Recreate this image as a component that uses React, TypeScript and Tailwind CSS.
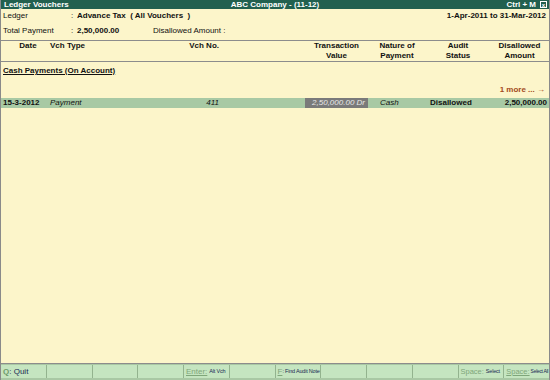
import React from "react";

const Cell = ({ children }: { children?: React.ReactNode }) => (
  <div className="flex-1 h-full border-r border-[#93b38e] last:border-r-0 flex items-center pl-[2px] overflow-hidden whitespace-nowrap bg-[#c5e5c0]">
    {children}
  </div>
);

export default function App() {
  return (
    <div
      className="w-[550px] h-[380px] flex flex-col bg-[#fcf5ca] border-l border-r border-[#8a8a8a] text-[8px] text-[#111] overflow-hidden"
      style={{ fontFamily: '"Liberation Sans", Arial, sans-serif' }}
    >
      {/* Title bar */}
      <div className="h-[9px] bg-[#22604f] text-white font-bold flex items-center leading-[9px] relative">
        <div className="pl-[3px] flex-1">Ledger Vouchers</div>
        <div className="absolute left-0 right-0 text-center">ABC Company - (11-12)</div>
        <div className="flex items-center gap-[4px] pr-[2px]">
          <span>Ctrl + M</span>
          <span className="w-[7px] h-[7px] border border-white flex items-center justify-center text-[6px] leading-[6px]">x</span>
        </div>
      </div>

      {/* Info */}
      <div className="pt-[2px] pb-[4px] leading-[10px]">
        <div className="flex">
          <div className="w-[70px] pl-[2px]">Ledger</div>
          <div className="w-[6px]">:</div>
          <div className="font-bold flex-1 whitespace-pre">Advance Tax  ( All Vouchers  )</div>
          <div className="font-bold pr-[3px]">1-Apr-2011 to 31-Mar-2012</div>
        </div>
        <div className="flex mt-[5px]">
          <div className="w-[70px] pl-[2px]">Total Payment</div>
          <div className="w-[6px]">:</div>
          <div className="font-bold w-[76px]">2,50,000.00</div>
          <div>Disallowed Amount :</div>
        </div>
      </div>

      {/* Column headers */}
      <div className="border-t border-b border-[#8c8c8c] h-[22px] flex font-bold leading-[10px]">
        <div className="w-[45px] pl-[9px] text-center">Date</div>
        <div className="w-[100px] pl-[4px]">Vch Type</div>
        <div className="w-[74px] text-right pr-[1px]">Vch No.</div>
        <div className="w-[85px]"></div>
        <div className="w-[63px] text-center">Transaction<br />Value</div>
        <div className="w-[58px] text-center">Nature of<br />Payment</div>
        <div className="w-[64px] text-center">Audit<br />Status</div>
        <div className="w-[59px] text-center">Disallowed<br />Amount</div>
      </div>

      {/* Body */}
      <div className="flex-1 flex flex-col leading-[10px]">
        <div className="mt-[4px] pl-[2px] font-bold">
          <span className="underline">Cash Payments (On Account)</span>
        </div>
        <div className="mt-[9px] text-right pr-[4px] font-bold text-[#a24a22]">1 more ... →</div>
        <div className="mt-[3px] h-[10px] bg-[#a8c9a4] flex items-center">
          <div className="w-[45px] pl-[2px] font-bold">15-3-2012</div>
          <div className="w-[100px] pl-[4px] italic">Payment</div>
          <div className="w-[74px] text-right pr-[1px] italic">411</div>
          <div className="w-[85px]"></div>
          <div className="w-[63px] h-full bg-[#7a7a7a] text-[#e8e8e8] italic text-right pr-[3px]">2,50,000.00 Dr</div>
          <div className="w-[58px] pl-[12px] italic">Cash</div>
          <div className="w-[64px] pl-[4px] font-bold">Disallowed</div>
          <div className="w-[59px] text-right pr-[2px] font-bold">2,50,000.00</div>
        </div>
      </div>

      {/* Footer */}
      <div className="h-[17px] border-t border-[#8c8c8c] bg-[#a9c8a4] pt-[1px] pb-[2px] flex">
        <Cell>
          <span className="text-[#6f9b6a] font-bold">Q</span>
          <span className="text-[#1b2a55]">: Quit</span>
        </Cell>
        <Cell />
        <Cell />
        <Cell />
        <Cell>
          <span className="text-[#7fa67a] underline">Enter:</span>
          <span className="text-[#1b2a55] text-[5.5px] tracking-[-0.2px] ml-[2px]">Alt Vch</span>
        </Cell>
        <Cell />
        <Cell>
          <span className="text-[#7fa67a] underline">F</span>
          <span className="text-[#1b2a55] text-[5.5px] tracking-[-0.2px]">: Find Audit Note</span>
        </Cell>
        <Cell />
        <Cell />
        <Cell />
        <Cell>
          <span className="text-[#7fa67a] text-[7.5px]">Space:</span>
          <span className="text-[#1b2a55] text-[5.5px] tracking-[-0.2px] ml-[2px]">Select</span>
        </Cell>
        <Cell>
          <span className="text-[#7fa67a] text-[7.5px] underline">Space:</span>
          <span className="text-[#1b2a55] text-[5px] tracking-[-0.3px] ml-[1px]">Select All</span>
        </Cell>
      </div>
    </div>
  );
}
